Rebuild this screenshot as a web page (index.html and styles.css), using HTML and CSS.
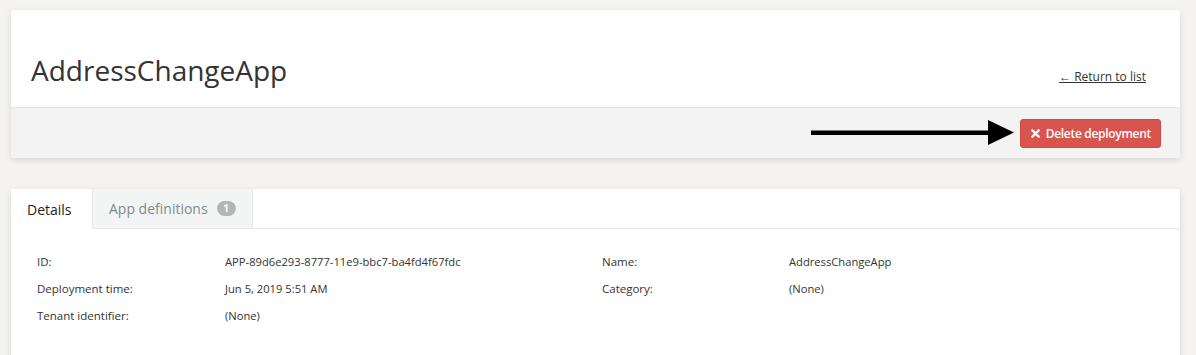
FILE: index.html
```html
<!DOCTYPE html>
<html lang="en">
<head>
    <meta charset="UTF-8">
    <title>AddressChangeApp</title>
    <link rel="stylesheet" href="styles.css">
</head>
<body>
    <!-- Page header -->
    <div class="card page-header">
        <div class="header-top">
            <h1 class="title">AddressChangeApp</h1>
            <a class="back-link" href="#">&larr; Return to list</a>
        </div>
        <div class="header-actions">
            <svg class="pointer-arrow" width="203" height="26" viewBox="0 0 203 26">
                <rect x="0" y="10.5" width="180" height="4.5" fill="#000"/>
                <polygon points="177,0 203,12.5 177,25" fill="#000"/>
            </svg>
            <button class="btn-danger">
                <svg class="btn-icon" width="9" height="9" viewBox="0 0 10 10">
                    <path d="M1.5 1.5 L8.5 8.5 M8.5 1.5 L1.5 8.5" stroke="#fff" stroke-width="2.6" stroke-linecap="round"/>
                </svg>
                Delete deployment
            </button>
        </div>
    </div>

    <!-- Details card -->
    <div class="card details-card">
        <div class="tabs">
            <div class="tab active">Details</div>
            <div class="tab">App definitions <span class="badge">1</span></div>
        </div>
        <div class="details">
            <div class="label">ID:</div>
            <div class="value">APP-89d6e293-8777-11e9-bbc7-ba4fd4f67fdc</div>
            <div class="label">Name:</div>
            <div class="value">AddressChangeApp</div>

            <div class="label">Deployment time:</div>
            <div class="value">Jun 5, 2019 5:51 AM</div>
            <div class="label">Category:</div>
            <div class="value">(None)</div>

            <div class="label">Tenant identifier:</div>
            <div class="value">(None)</div>
        </div>
    </div>
</body>
</html>
```

FILE: styles.css
```css
/* Basic Styling */
body {
    margin: 0;
    padding: 10px 16px 0 11px;
    background-color: #f4f3f2;
    font-family: "Open Sans", "Noto Sans", Arial, sans-serif;
    color: #333;
}

.card {
    background-color: #fff;
    border-radius: 3px;
    box-shadow: 0 2px 6px rgba(0, 0, 0, 0.12);
}

/* Page header */
.header-top {
    display: flex;
    justify-content: space-between;
    align-items: baseline;
    height: 97px;
    padding: 0 34px 0 20px;
    box-sizing: border-box;
}
.title {
    margin: 0;
    padding-top: 43px;
    font-size: 28px;
    font-weight: 400;
    line-height: 34px;
}
.back-link {
    font-size: 12px;
    color: #333;
    text-decoration: underline;
}
.header-actions {
    display: flex;
    justify-content: flex-end;
    align-items: center;
    height: 50px;
    padding-right: 19px;
    background-color: #f3f3f3;
    border-top: 1px solid #e6e6e6;
    border-radius: 0 0 3px 3px;
}
.pointer-arrow { margin-right: 6px; }
.btn-danger {
    display: flex;
    align-items: center;
    gap: 6px;
    height: 29px;
    padding: 0 9px 0 10px;
    background-color: #d9534f;
    color: #fff;
    border: 1px solid #d14a46;
    border-radius: 3px;
    font-family: inherit;
    font-size: 12px;
    font-weight: 600;
    letter-spacing: -0.3px;
}

/* Details card */
.details-card {
    margin-top: 31px;
    height: 180px;
    border-radius: 3px 3px 0 0;
}
.tabs {
    display: flex;
    height: 39px;
    border-bottom: 1px solid #e6e8e8;
}
.tab {
    display: flex;
    align-items: center;
    padding: 0 16px;
    font-size: 14px;
    color: #7f8a8a;
    background-color: #f3f5f5;
    border-left: 1px solid #e6e8e8;
    border-right: 1px solid #e6e8e8;
}
.tab.active {
    min-width: 81px;
    box-sizing: border-box;
    background-color: #fff;
    color: #222;
    border: none;
    margin-bottom: -1px;
}
.badge {
    display: inline-block;
    margin-left: 9px;
    width: 19px;
    height: 15px;
    line-height: 15px;
    border-radius: 8px;
    background-color: #b5b5b5;
    color: #fff;
    font-size: 10px;
    font-weight: 700;
    text-align: center;
}
.details {
    display: grid;
    grid-template-columns: 188px 377px 187px 1fr;
    row-gap: 10px;
    padding: 24px 0 0 26px;
    font-size: 11.5px;
    line-height: 17px;
}
.value { font-size: 11.2px; }
```
